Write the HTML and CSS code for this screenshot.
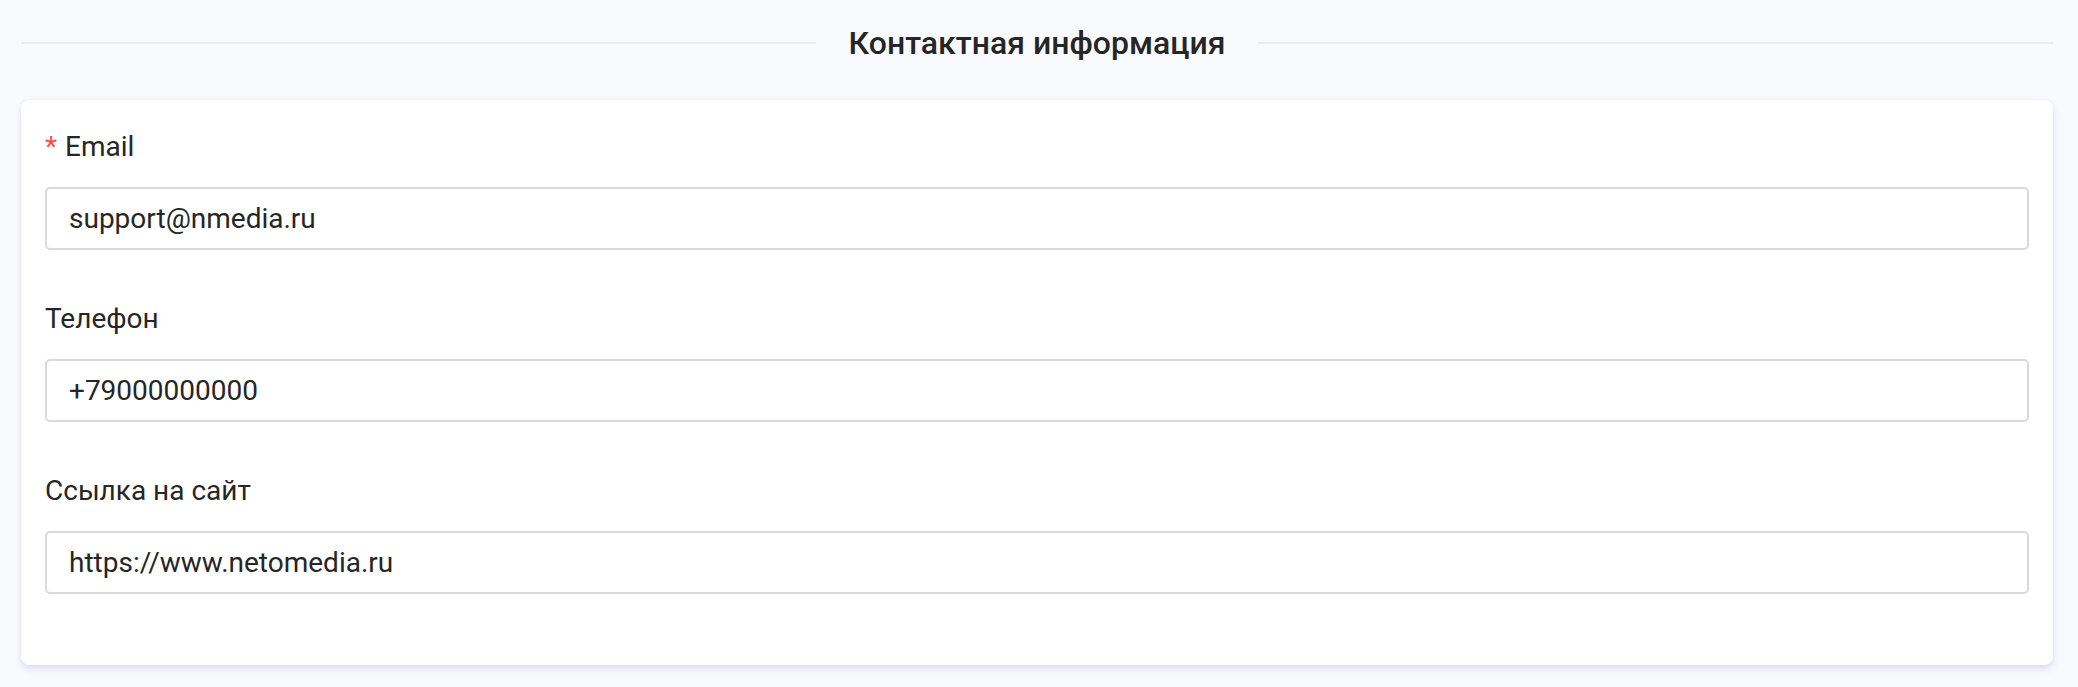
FILE: index.html
```html
<!DOCTYPE html>
<html lang="ru">
<head>
<meta charset="utf-8">
<title>Контактная информация</title>
<link rel="stylesheet" href="styles.css">
</head>
<body>
<div class="page">
  <div class="divider">
    <span class="divider-line"></span>
    <h2 class="divider-title">Контактная информация</h2>
    <span class="divider-line"></span>
  </div>
  <div class="card">
    <div class="form-item">
      <div class="label"><span class="required">*</span>Email</div>
      <div class="input">support@nmedia.ru</div>
    </div>
    <div class="form-item">
      <div class="label">Телефон</div>
      <div class="input">+79000000000</div>
    </div>
    <div class="form-item">
      <div class="label">Ссылка на сайт</div>
      <div class="input">https://www.netomedia.ru</div>
    </div>
  </div>
</div>
</body>
</html>
```

FILE: styles.css
```css
html, body {
  margin: 0;
  padding: 0;
  background: #f9fafe;
}
body {
  font-family: Roboto, "Liberation Sans", Arial, sans-serif;
  color: #262626;
}
.page {
  padding: 18px 25px 20px 21px;
}
.divider {
  display: flex;
  align-items: center;
  height: 50px;
  margin-bottom: 32px;
}
.divider-line {
  flex: 1;
  height: 2px;
  background: #ebecf1;
}
.divider-title {
  margin: 0 33px;
  font-size: 32px;
  font-weight: 500;
  line-height: 50px;
  color: #262626;
  white-space: nowrap;
}
.card {
  background: #ffffff;
  border-radius: 8px;
  padding: 24px 24px 25px;
  box-shadow: 0 4px 7px rgba(60, 90, 180, 0.15), 0 0 2px rgba(60, 90, 180, 0.10);
}
.form-item {
  margin-bottom: 46px;
}
.label {
  font-size: 28px;
  line-height: 46px;
  padding-bottom: 17px;
  color: #262626;
}
.required {
  color: #ff4d4f;
  margin-right: 8px;
  font-size: 28px;
}
.input {
  box-sizing: border-box;
  height: 63px;
  border: 2px solid #d9d9d9;
  border-radius: 5px;
  padding: 0 22px;
  font-size: 28px;
  line-height: 59px;
  color: #262626;
  background: #fff;
}
```
